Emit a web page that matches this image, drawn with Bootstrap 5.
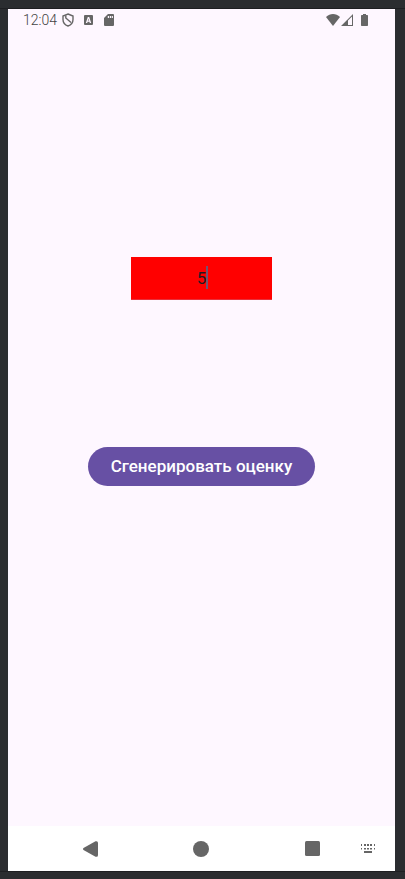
<!DOCTYPE html>
<html lang="ru">
<head>
<meta charset="utf-8">
<meta name="viewport" content="width=device-width, initial-scale=1">
<title>Генератор оценки</title>
<link href="https://cdn.jsdelivr.net/npm/bootstrap@5.3.0/dist/css/bootstrap.min.css" rel="stylesheet">
<style>
body { background: #2b2d30; font-family: Roboto, "Noto Sans", sans-serif; }
.bezel-top, .bezel-bottom { height: 9px; border-bottom: 1px solid #1e1f22; }
.bezel-bottom { height: 8px; border-bottom: 0; border-top: 1px solid #1e1f22; }
.device { margin-left: 8px; margin-right: 10px; background: #fef7ff; color: #666; }
.status { height: 22px; padding: 0 27px 0 15px; font-size: 14px; line-height: 22px; }
.clock { font-weight: 300; color: #444; }
.status svg, .system-nav svg { display: block; fill: #666; }
.status-left { gap: 5px; }
.notices { gap: 10px; }
.signals { gap: 1px; }
.space-a { flex: 226 1 0; }
.space-b { flex: 148 1 0; }
.space-c { flex: 340 1 0; }
.grade { width: 141px; }
.grade input { height: 43px; background: #f00; color: #1d1b20; font-size: 17px; caret-color: transparent; border-bottom: 1px solid #e8303a; }
.grade input:focus { outline: 0; }
.caret { width: 2px; height: 23px; background: #73546f; left: 75px; top: 9px; }
.generate { height: 39px; padding: 0 23px; font-size: 17px; line-height: 39px; font-weight: 500; color: #fff; background: #6750a4; }
.generate:hover { color: #fff; background: #5b4594; }
.system-nav { display: grid; grid-template-columns: 1fr 58px 1fr 58px 1fr 58px 54px; height: 45px; background: #fff; }
.system-nav .btn { grid-row: 1; }
.nav-back { grid-column: 2; }
.nav-home { grid-column: 4; }
.nav-recent { grid-column: 6; }
.nav-keys { grid-column: 7; }
</style>
<script defer src="https://cdn.jsdelivr.net/npm/bootstrap@5.3.0/dist/js/bootstrap.bundle.min.js"></script>
</head>
<body class="d-flex flex-column min-vh-100">
<div class="bezel-top"></div>
<div class="device d-flex flex-column flex-grow-1">
  <header class="status d-flex align-items-center justify-content-between">
    <div class="status-left d-flex align-items-center">
      <span class="clock">12:04</span>
      <div class="notices d-flex align-items-center">
        <svg width="12" height="14" viewBox="0 0 12 14" aria-hidden="true"><path d="M6 1 11 3v3.500C11 9.500 9 12 6 13 3 12 1 9.500 1 6.500V3z" style="fill:none;stroke:#666;stroke-width:1.400"/><path d="M3.800 2.500v2.500L9 9.500" style="fill:none;stroke:#666;stroke-width:1.400"/></svg>
        <svg width="9" height="10" viewBox="0 0 9 10" aria-hidden="true"><path fill-rule="evenodd" d="M1 0h7q1 0 1 1v8q0 1-1 1H1q-1 0-1-1V1q0-1 1-1zM3.800 2 1.800 8H3.200l.4-1.300h1.800L5.800 8h1.400l-2-6zM4.500 3.700 5.100 5.600H3.900z"/></svg>
        <svg width="12" height="12" viewBox="0 0 12 12" aria-hidden="true"><path fill-rule="evenodd" d="M5 0h5q1 0 1 1v10q0 1-1 1H2q-1 0-1-1V4zM4.800 2v2H6V2zM6.800 2v2H8V2zM8.700 2v2h1.200V2z"/></svg>
      </div>
    </div>
    <div class="d-flex align-items-center">
      <div class="signals d-flex align-items-center">
        <svg width="14" height="12" viewBox="0 0 14 12" aria-hidden="true"><path d="M0 3C4-.9 10-.9 14 3L7 12z"/></svg>
        <svg width="12" height="12" viewBox="0 0 12 12" aria-hidden="true"><path fill-rule="evenodd" d="M12 0v12H0zM11 2.500 7 6.500V11h4z"/></svg>
      </div>
      <svg class="ms-2" width="7" height="12" viewBox="0 0 7 12" aria-hidden="true"><path d="M2 0h3v1h1.300q.7 0 .7.7v9.600q0 .7-.7.7H.7Q0 12 0 11.300V1.700Q0 1 .7 1H2z"/></svg>
    </div>
  </header>
  <main class="d-flex flex-column align-items-center flex-grow-1">
    <div class="space-a"></div>
    <div class="grade position-relative">
      <input class="d-block w-100 border-start-0 border-end-0 border-top-0 rounded-0 p-0 text-center" type="text" value="5" aria-label="Оценка">
      <span class="caret position-absolute"></span>
    </div>
    <div class="space-b"></div>
    <button class="generate btn border-0 rounded-pill text-nowrap" type="button">Сгенерировать оценку</button>
    <div class="space-c"></div>
  </main>
  <nav class="system-nav" aria-label="Система">
    <button class="nav-back btn border-0 rounded-0 p-0 d-flex align-items-center justify-content-center" type="button" aria-label="Назад"><svg width="15" height="16" viewBox="0 0 15 16"><path d="M.5 7 12.500.3Q15-.4 15 2v12q0 2.400-2.500 1.700L.5 9q-1-1 0-2z"/></svg></button>
    <button class="nav-home btn border-0 rounded-0 p-0 d-flex align-items-center justify-content-center" type="button" aria-label="Домой"><svg width="16" height="16" viewBox="0 0 16 16"><circle cx="8" cy="8" r="8"/></svg></button>
    <button class="nav-recent btn border-0 rounded-0 p-0 d-flex align-items-center justify-content-center" type="button" aria-label="Недавние"><svg width="15" height="15" viewBox="0 0 15 15"><rect width="15" height="15" rx="1.500"/></svg></button>
    <button class="nav-keys btn border-0 rounded-0 p-0 d-flex align-items-center justify-content-center" type="button" aria-label="Клавиатура"><svg width="14" height="9" viewBox="0 0 14 9"><path d="M0 0h1v2H0zM3 0h2v2H3zM6 0h2v2H6zM9 0h2v2H9zM13 0h1v2h-1zM0 4h1v1.500H0zM3 4h2v1.500H3zM6 4h2v1.500H6zM9 4h2v1.500H9zM13 4h1v1.500h-1zM3 7h8v2H3z"/></svg></button>
  </nav>
</div>
<div class="bezel-bottom"></div>
</body>
</html>
